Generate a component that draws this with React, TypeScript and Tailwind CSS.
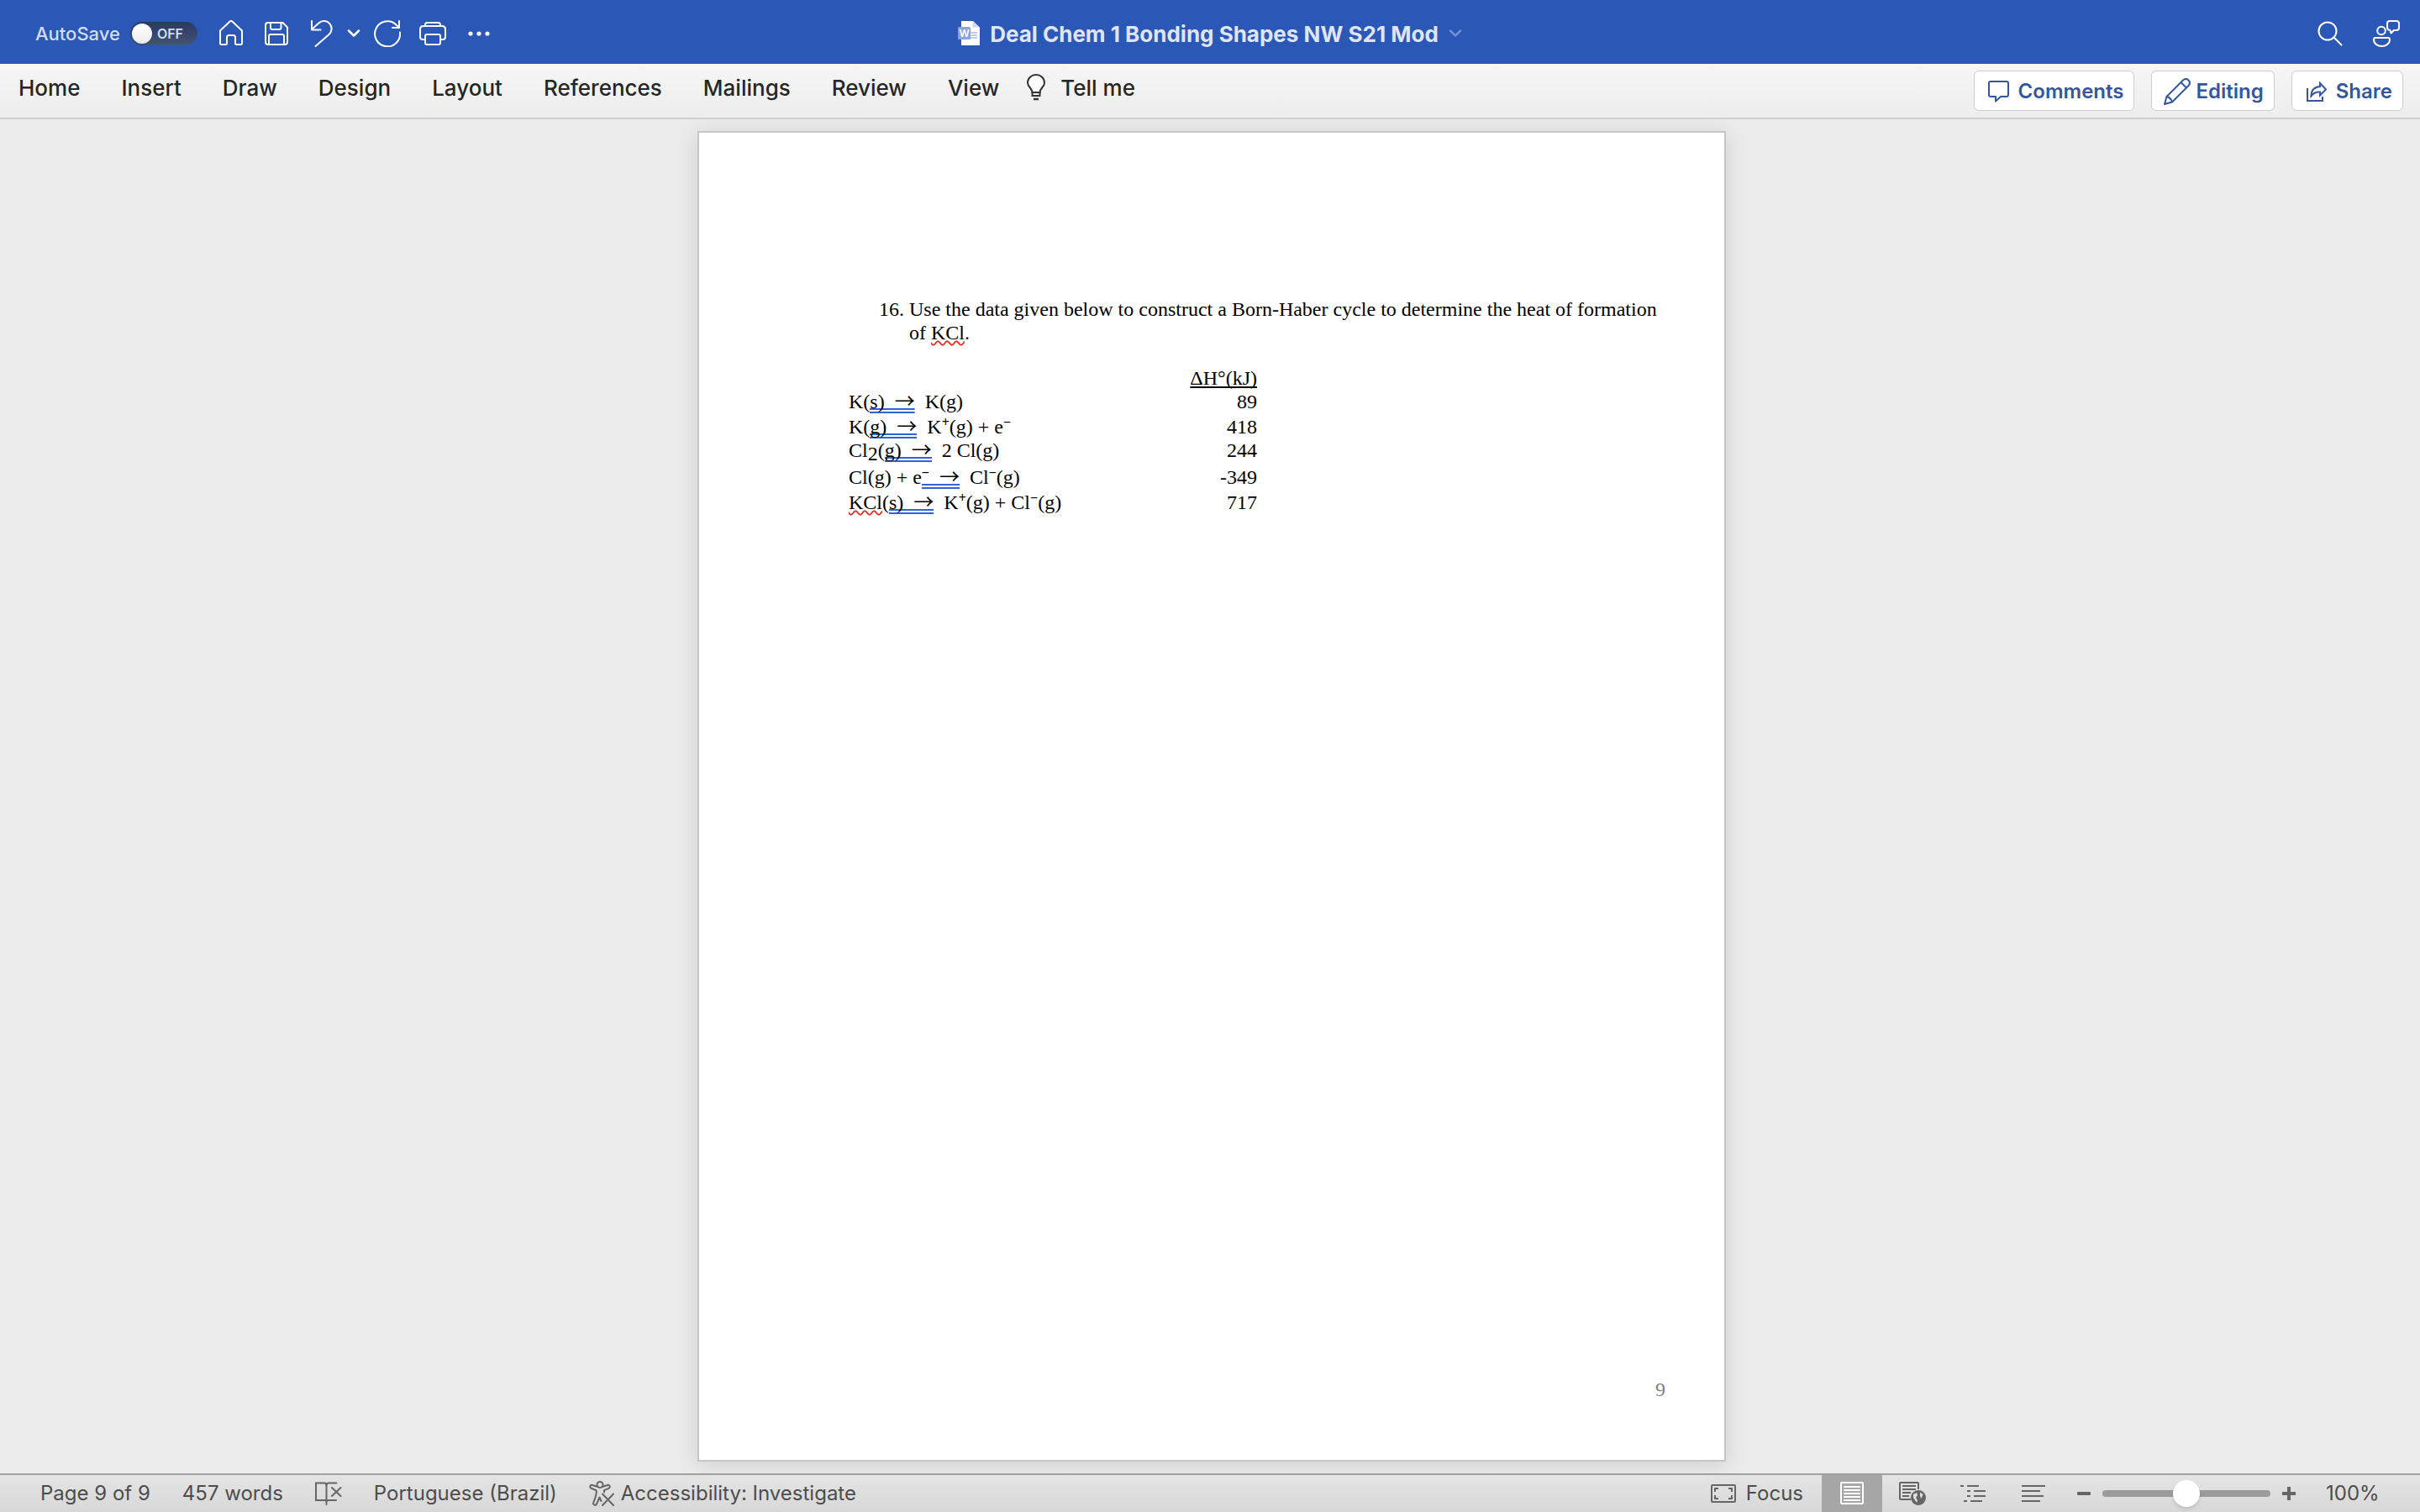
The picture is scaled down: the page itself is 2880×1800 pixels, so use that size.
import { useState } from "react";
import type { ReactNode } from "react";

const tabs = ["Home", "Insert", "Draw", "Design", "Layout", "References", "Mailings", "Review", "View"];

function HomeIcon() {
  return (
    <svg width="28" height="32" viewBox="0 0 28 32" fill="none" stroke="currentColor" strokeWidth="2" strokeLinejoin="round">
      <path d="M1 12.5 L12.6 1.6 Q14 .4 15.4 1.6 L27 12.5 V27.5 Q27 29 25.5 29 H20.5 Q19 29 19 27.5 V20.5 Q19 18 16.5 18 H11.5 Q9 18 9 20.5 V27.5 Q9 29 7.5 29 H2.5 Q1 29 1 27.5 Z" />
    </svg>
  );
}

function SaveIcon() {
  return (
    <svg width="28" height="28" viewBox="0 0 28 28" fill="none" stroke="currentColor" strokeWidth="2" strokeLinejoin="round">
      <path d="M4 1 H21.5 L27 6.5 V24 Q27 27 24 27 H4 Q1 27 1 24 V4 Q1 1 4 1 Z" />
      <path d="M7 1 V7 Q7 9 9 9 H17.5 Q19.5 9 19.5 7 V1" />
      <path d="M5 27 V17 Q5 15 7 15 H21 Q23 15 23 17 V27" />
    </svg>
  );
}

function UndoIcon() {
  return (
    <svg width="28" height="32" viewBox="0 0 28 32" fill="none" stroke="currentColor" strokeWidth="2" strokeLinecap="round" strokeLinejoin="round">
      <path d="M2 1 V11.5 H12.5" />
      <path d="M2 11 L10 3.7 C14.5 -.3 20.5 .6 23.5 4.3 C26.8 8.4 26 13.5 22.6 17 L6.5 31" />
    </svg>
  );
}

function ChevronIcon() {
  return (
    <svg width="16" height="10" viewBox="0 0 16 10" fill="none" stroke="currentColor" strokeWidth="2.5" strokeLinecap="round" strokeLinejoin="round">
      <path d="M2 1.5 L8 7.5 L14 1.5" />
    </svg>
  );
}

function RedoIcon() {
  return (
    <svg width="32" height="32" viewBox="0 0 32 32" fill="none" stroke="currentColor" strokeWidth="2" strokeLinecap="round" strokeLinejoin="round">
      <path d="M31 14.5 A15 15 0 1 1 26.5 5.5 L29.5 8.5" />
      <path d="M30 1 V9 H22" />
    </svg>
  );
}

function PrintIcon() {
  return (
    <svg width="32" height="28" viewBox="0 0 32 28" fill="none" stroke="currentColor" strokeWidth="2" strokeLinejoin="round">
      <path d="M7 5 V3.5 Q7 1 9.5 1 H22.5 Q25 1 25 3.5 V5" />
      <path d="M7 21 H4 Q1 21 1 18 V9 Q1 5 5 5 H27 Q31 5 31 9 V18 Q31 21 28 21 H25" />
      <rect x="7" y="15" width="18" height="12" rx="2" />
    </svg>
  );
}

function MoreIcon() {
  return (
    <svg width="26" height="6" viewBox="0 0 26 6" fill="currentColor">
      <circle cx="3" cy="3" r="2.6" />
      <circle cx="13" cy="3" r="2.6" />
      <circle cx="23" cy="3" r="2.6" />
    </svg>
  );
}

function DocIcon() {
  return (
    <svg width="26" height="30" viewBox="0 0 26 30">
      <path d="M4 0 H18 L26 8 V29 H4 Z" fill="#fff" />
      <path d="M17.5 0 V7.5 H26 Z" fill="#cfd8ec" />
      <path d="M15 14 H23 M15 17 H23 M15 20 H23" stroke="#7f9fda" strokeWidth="1.2" />
      <rect x="0" y="7" width="15" height="15" rx="1.5" fill="#8aa4db" />
      <text x="7.5" y="19" textAnchor="middle" fontFamily="Inter, sans-serif" fontSize="12" fontWeight="600" fill="#fff">W</text>
    </svg>
  );
}

function SearchIcon() {
  return (
    <svg width="30" height="30" viewBox="0 0 30 30" fill="none" stroke="currentColor" strokeWidth="2" strokeLinecap="round">
      <circle cx="12" cy="12" r="10.5" />
      <path d="M19.5 19.5 L28.5 28.5" />
    </svg>
  );
}

function PresenceIcon() {
  return (
    <svg width="32" height="32" viewBox="0 0 32 32" fill="none" stroke="currentColor" strokeWidth="2" strokeLinejoin="round">
      <circle cx="10" cy="12.5" r="4.8" />
      <path d="M3 21 H18 Q20 21 20 23 C20 28 15.5 31 10.5 31 C5.5 31 1 28 1 23 Q1 21 3 21 Z" />
      <path d="M20 1 H28 Q31 1 31 4 V9 Q31 12 28 12 H25 L21.5 15.5 L20.5 12 Q17 11.5 17 9 V4 Q17 1 20 1 Z" />
    </svg>
  );
}

function BulbIcon() {
  return (
    <svg width="22" height="32" viewBox="0 0 22 32" fill="none" stroke="#333" strokeWidth="2">
      <path d="M6.5 22 C6.5 17 1 15.5 1 10.5 C1 5 5.5 1 11 1 C16.5 1 21 5 21 10.5 C21 15.5 15.5 17 15.5 22 Z" fill="#fff" />
      <path d="M6.5 21 V26 H15.5 V21" />
      <path d="M8 30 H14" strokeWidth="2.5" />
    </svg>
  );
}

function CommentIcon() {
  return (
    <svg width="32" height="32" viewBox="0 0 32 32" fill="none" stroke="currentColor" strokeWidth="2" strokeLinejoin="round">
      <path d="M5 4 H24 Q26 4 26 6 V20 Q26 22 24 22 H17 L11 27.5 V22 H5 Q3 22 3 20 V6 Q3 4 5 4 Z" />
    </svg>
  );
}

function PencilIcon() {
  return (
    <svg width="32" height="32" viewBox="0 0 32 32" fill="none" stroke="currentColor" strokeWidth="2" strokeLinejoin="round">
      <path d="M1 31 L3.5 22 L23 2.5 Q26.5 -.5 29.5 2.5 Q32.5 5.5 29.5 9 L10 28.5 Z" />
      <path d="M20.5 5 L27 11.5 M3.5 22 Q8.5 23 10 28.5" />
    </svg>
  );
}

function ShareIcon() {
  return (
    <svg width="32" height="32" viewBox="0 0 32 32" fill="none" stroke="currentColor" strokeWidth="2" strokeLinejoin="miter">
      <path d="M4 12 V27 H22 V22" />
      <path d="M19 6 L26 13.5 L19 20.5 V16.5 C14 16 11 18 8.5 21.5 C8.5 15 12 10.5 19 10 Z" />
    </svg>
  );
}

function ProofIcon() {
  return (
    <svg width="32" height="28" viewBox="0 0 32 28" fill="none" stroke="currentColor" strokeWidth="2" strokeLinecap="round">
      <path d="M13.5 27 V4 Q13.5 1.5 11 1.5 H1 V22 H11.5 Q13.5 22 13.5 24 Q13.5 22 16 22 H25" />
      <path d="M13.5 4 Q13.5 1.5 16 1.5 H25.5" />
      <path d="M20 7 L30.5 17 M30.5 7 L20 17" />
    </svg>
  );
}

function AccessibilityIcon() {
  return (
    <svg width="30" height="30" viewBox="0 0 30 30" fill="none" stroke="currentColor" strokeWidth="2" strokeLinecap="round" strokeLinejoin="round">
      <circle cx="13" cy="4.5" r="3.5" />
      <path d="M9.5 6.8 L4 5 C1.5 4.2 0 7.8 2.6 8.8 L8.5 11.2 C9.5 13.5 8 19 5.2 26 C4.5 28.5 7.8 30 9 27.5 L12.5 19.5 L14.5 24" />
      <path d="M16.5 6.8 L22 5 C24.5 4.2 26 7.8 23.4 8.8 L18 11.2 V13.5" />
      <path d="M16 15.5 L29 29 M29 15.5 L16 29" />
    </svg>
  );
}

function FocusIcon() {
  return (
    <svg width="30" height="24" viewBox="0 0 30 24" fill="none" stroke="currentColor" strokeWidth="2">
      <rect x="1" y="2" width="28" height="20" rx="1" />
      <path d="M5 10 V6 H9 M21 6 H25 V10 M25 14 V18 H21 M9 18 H5 V14" />
    </svg>
  );
}

function PrintLayoutIcon() {
  return (
    <svg width="28" height="28" viewBox="0 0 28 28" fill="none" stroke="#fff" strokeWidth="2">
      <rect x="1" y="1" width="26" height="25" rx="1" />
      <path d="M4 6 H24 M4 10 H24 M4 14 H24 M4 18 H24 M4 22 H24" />
    </svg>
  );
}

function WebLayoutIcon() {
  return (
    <svg width="32" height="28" viewBox="0 0 32 28" fill="none" stroke="currentColor" strokeWidth="2">
      <path d="M14 21 H2 Q1 21 1 20 V2 Q1 1 2 1 H22 Q23 1 23 2 V9" />
      <path d="M4 5 H20 M4 9 H20 M4 13 H14 M4 17 H12" />
      <circle cx="23" cy="19" r="9" fill="currentColor" stroke="none" />
      <path d="M17 15 L21 13 L22 16 L20 19 L22 22 L21 25 L17 19 Z M25 12.5 L28.5 15 L26.5 20 L25 17 Z" fill="#dedede" stroke="none" />
    </svg>
  );
}

function OutlineIcon() {
  return (
    <svg width="30" height="22" viewBox="0 0 30 22" fill="none" stroke="currentColor" strokeWidth="2">
      <path d="M0 2 H4 M8 2 H22 M8 8 H12 M16 8 H30 M8 14 H12 M16 14 H30 M4 20 H8 M12 20 H26" />
    </svg>
  );
}

function DraftIcon() {
  return (
    <svg width="28" height="22" viewBox="0 0 28 22" fill="none" stroke="currentColor" strokeWidth="2">
      <path d="M0 2 H28 M0 8 H22 M0 14 H26 M0 20 H22" />
    </svg>
  );
}

function Spelling({ children }: { children: ReactNode }) {
  return (
    <span className="underline decoration-wavy decoration-[#e0352b] decoration-2 underline-offset-1 [text-decoration-skip-ink:none]">
      {children}
    </span>
  );
}

// two crisp 2px lines right under the baseline
function Grammar({ children }: { children: ReactNode }) {
  return (
    <span className="bg-[linear-gradient(#3361d8_2px,transparent_2px,transparent_4px,#3361d8_4px)] bg-[length:100%_6px] bg-bottom bg-no-repeat pb-px whitespace-pre">
      {children}
      {"  "}
      <span className="font-['Noto_Sans_CJK_JP',sans-serif] leading-none">→</span>
    </span>
  );
}

function Sup({ children }: { children: ReactNode }) {
  return <sup className="text-base leading-none font-bold">{children}</sup>;
}

const reactions = [
  {
    height: "h-7",
    value: "89",
    formula: <>K(<Grammar>s)</Grammar>{"  K(g)"}</>,
  },
  {
    height: "h-[30px]",
    value: "418",
    formula: <>K(<Grammar>g)</Grammar>{"  K"}<Sup>+</Sup>(g) + e<Sup>−</Sup></>,
  },
  {
    height: "h-7",
    value: "244",
    formula: <>Cl<sub className="-bottom-1 text-2xl leading-none">2</sub>(<Grammar>g)</Grammar>{"  2 Cl(g)"}</>,
  },
  {
    height: "h-8",
    value: "-349",
    formula: <>Cl(g) + e<Grammar><Sup>−</Sup></Grammar>{"  Cl"}<Sup>−</Sup>(g)</>,
  },
  {
    height: "h-[30px]",
    value: "717",
    formula: <><Spelling>KCl</Spelling>(<Grammar>s)</Grammar>{"  K"}<Sup>+</Sup>(g) + Cl<Sup>−</Sup>(g)</>,
  },
];

function TitleBar() {
  const [autoSave, setAutoSave] = useState(false);

  return (
    <header className="grid h-[76px] shrink-0 grid-cols-[1fr_auto_1fr] items-center bg-[#2b58b7] px-6 pt-1 text-white">
      <div className="flex items-center pl-[18px]">
        <label className="flex cursor-pointer items-center gap-3 text-[22px] font-medium text-[#d3dcf0]">
          AutoSave
          <input
            type="checkbox"
            checked={autoSave}
            onChange={(event) => setAutoSave(event.target.checked)}
            className="sr-only"
          />
          <span className="flex h-7 w-20 items-center gap-1.5 rounded-full bg-linear-to-b from-[#293a63] to-[#43547a] px-0.5 text-base font-semibold">
            <span className="size-6 rounded-full bg-linear-to-b from-white to-[#ececec] shadow" />
            {autoSave ? "ON" : "OFF"}
          </span>
        </label>
        <div className="ml-[26px] flex items-center gap-[26px]">
          <button aria-label="Home"><HomeIcon /></button>
          <button aria-label="Save"><SaveIcon /></button>
          <div className="flex items-center gap-4">
            <button aria-label="Undo"><UndoIcon /></button>
            <button aria-label="Undo history"><ChevronIcon /></button>
            <button aria-label="Redo"><RedoIcon /></button>
          </div>
          <button aria-label="Print" className="-ml-1"><PrintIcon /></button>
          <button aria-label="More"><MoreIcon /></button>
        </div>
      </div>
      <div className="flex items-center gap-3">
        <DocIcon />
        <h1 className="text-[26px] font-bold text-[#dfe5f4]">Deal Chem 1 Bonding Shapes NW S21 Mod</h1>
        <button aria-label="Document options" className="text-[#6f8fd3]"><ChevronIcon /></button>
      </div>
      <div className="flex items-center justify-end gap-9">
        <button aria-label="Search"><SearchIcon /></button>
        <button aria-label="Presence"><PresenceIcon /></button>
      </div>
    </header>
  );
}

function Ribbon() {
  const actions = [
    { name: "Comments", icon: <CommentIcon /> },
    { name: "Editing", icon: <PencilIcon /> },
    { name: "Share", icon: <ShareIcon /> },
  ];

  return (
    <div className="flex h-[66px] shrink-0 items-center justify-between border-b-2 border-[#cfcfcf] bg-linear-to-b from-[#f6f6f6] to-[#ededed] pr-5 pl-[22px]">
      <nav className="flex items-center gap-[49px] pb-2 text-[26px] font-medium text-[#262626]">
        {tabs.map((tab) => (
          <button key={tab}>{tab}</button>
        ))}
        <button className="-ml-4 flex items-center gap-[18px]">
          <BulbIcon />
          Tell me
        </button>
      </nav>
      <div className="flex items-center gap-5">
        {actions.map((action) => (
          <button
            key={action.name}
            className="flex h-12 items-center gap-1.5 rounded-md border border-[#cdcdcd] bg-white pt-0.5 pr-3 pl-3.5 text-2xl font-semibold text-[#34569b]"
          >
            {action.icon}
            {action.name}
          </button>
        ))}
      </div>
    </div>
  );
}

function DocumentPage() {
  return (
    <article className="flex w-[1224px] flex-col border-2 border-[#c6c6c6] bg-white pt-[196px] pr-[70px] pb-[70px] pl-[178px] font-['Liberation_Serif',serif] text-2xl leading-7 text-black shadow-[0_4px_24px_rgba(0,0,0,0.12)]">
      <div className="flex pl-9">
        <span className="w-9 shrink-0">16.</span>
        <p>
          Use the data given below to construct a Born-Haber cycle to determine the heat of formation of{" "}
          <Spelling>KCl</Spelling>.
        </p>
      </div>
      <table className="mt-[26px] w-[486px]">
        <thead>
          <tr>
            <td className="p-0" />
            <th className="p-0 text-right font-normal underline decoration-2 underline-offset-2 [text-decoration-skip-ink:none]">
              ΔH°(kJ)
            </th>
          </tr>
        </thead>
        <tbody>
          {reactions.map((reaction) => (
            <tr key={reaction.value} className={reaction.height}>
              <td className="p-0 align-bottom whitespace-pre">{reaction.formula}</td>
              <td className="p-0 text-right align-bottom">{reaction.value}</td>
            </tr>
          ))}
        </tbody>
      </table>
      <footer className="mt-auto text-right text-[#808080]">9</footer>
    </article>
  );
}

function StatusBar() {
  const [zoom, setZoom] = useState(100);

  return (
    <footer className="flex h-[46px] shrink-0 items-stretch justify-between border-t-2 border-[#a0a0a0] bg-linear-to-b from-[#e4e4e4] to-[#d8d8d8] pl-12 text-2xl text-[#4d4d4d]">
      <div className="flex items-center gap-[38px]">
        <button>Page 9 of 9</button>
        <button>457 words</button>
        <button aria-label="Proofing" className="text-[#666]"><ProofIcon /></button>
        <button>Portuguese (Brazil)</button>
        <button className="flex items-center gap-2">
          <span className="text-[#666]"><AccessibilityIcon /></span>
          Accessibility: Investigate
        </button>
      </div>
      <div className="flex items-stretch text-[#666]">
        <button className="flex items-center gap-3 pr-[22px]">
          <FocusIcon />
          <span className="text-[#4d4d4d]">Focus</span>
        </button>
        <button aria-label="Print layout" className="flex w-[72px] items-center justify-center bg-[#a6a6a6]"><PrintLayoutIcon /></button>
        <button aria-label="Web layout" className="flex w-[72px] items-center justify-center"><WebLayoutIcon /></button>
        <button aria-label="Outline" className="flex w-[72px] items-center justify-center"><OutlineIcon /></button>
        <button aria-label="Draft" className="flex w-[72px] items-center justify-center"><DraftIcon /></button>
        <div className="flex items-center gap-3.5 pl-4">
          <button aria-label="Zoom out" onClick={() => setZoom(zoom - 10)}>
            <svg width="16" height="16" viewBox="0 0 16 16" fill="currentColor"><rect y="6" width="16" height="4" rx="1" /></svg>
          </button>
          <input
            type="range"
            aria-label="Zoom"
            min={0}
            max={200}
            value={zoom}
            onChange={(event) => setZoom(Number(event.target.value))}
            className="h-2 w-[200px] appearance-none rounded-full bg-[#9b9b9b] [&::-webkit-slider-thumb]:size-8 [&::-webkit-slider-thumb]:appearance-none [&::-webkit-slider-thumb]:rounded-full [&::-webkit-slider-thumb]:bg-white [&::-webkit-slider-thumb]:shadow-md"
          />
          <button aria-label="Zoom in" onClick={() => setZoom(zoom + 10)}>
            <svg width="16" height="16" viewBox="0 0 16 16" fill="currentColor"><path d="M6 0 H10 V6 H16 V10 H10 V16 H6 V10 H0 V6 H6 Z" /></svg>
          </button>
        </div>
        <button className="w-[148px] pl-9 text-left text-[#4d4d4d]">{zoom}%</button>
      </div>
    </footer>
  );
}

export default function App() {
  return (
    <div className="flex h-screen flex-col bg-[#ebebeb] font-['Inter',sans-serif]">
      <TitleBar />
      <Ribbon />
      <main className="flex min-h-0 flex-1 justify-center overflow-hidden py-3.5 pl-1">
        <DocumentPage />
      </main>
      <StatusBar />
    </div>
  );
}
